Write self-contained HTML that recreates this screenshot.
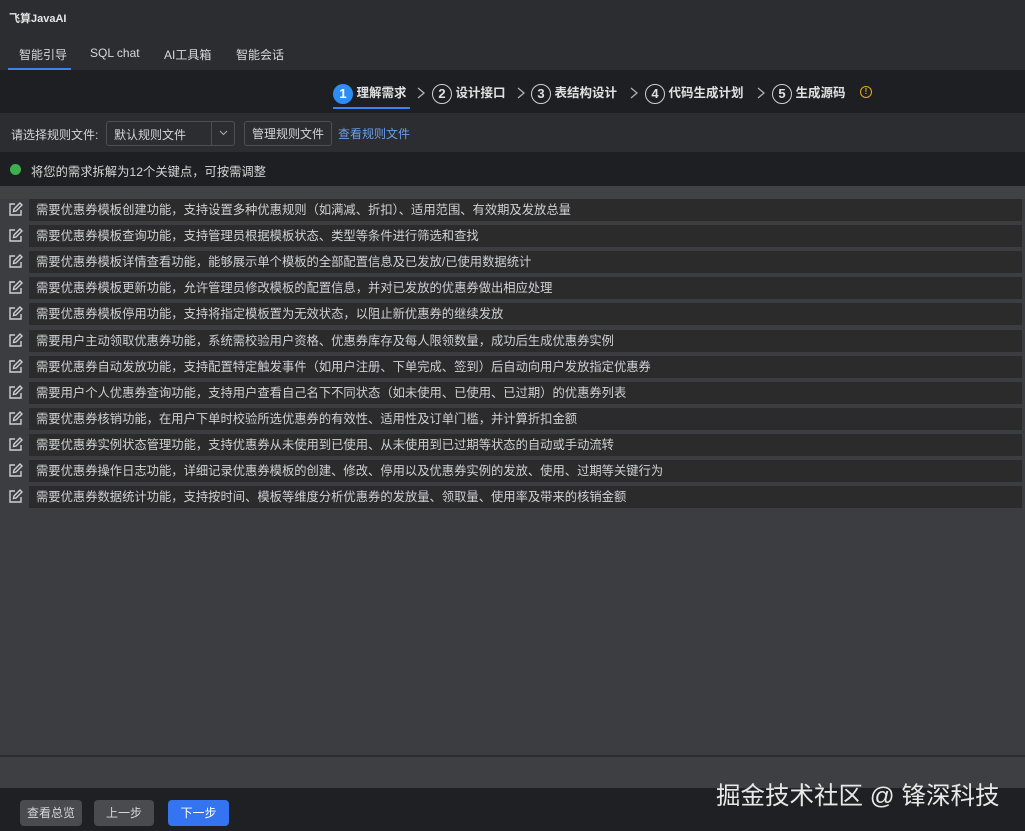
<!DOCTYPE html>
<html><head><meta charset="utf-8"><style>
*{margin:0;padding:0;box-sizing:border-box}
body{width:1025px;height:831px;overflow:hidden;background:#3c3d40;font-family:"Liberation Sans","Noto Sans CJK SC",sans-serif;font-size:12px;color:#d4d5d8;position:relative}
.abs{position:absolute}
.top{left:0;top:0;width:1025px;height:70px;background:#2b2d30}
.steps{left:0;top:70px;width:1025px;height:43px;background:#1e1f22}
.tool{left:0;top:113px;width:1025px;height:39px;background:#2b2d30}
.status{left:0;top:152px;width:1025px;height:34px;background:#1e1f22}
.band{left:0;top:186px;width:1025px;height:13px;background:#414244}
.row{left:29px;width:993px;height:22px;background:#2b2b2c;line-height:22px;padding-left:7px;font-size:12.3px;color:#d0d1d3;white-space:nowrap}
.ic{left:8px;width:15px;height:15px}
.circ{display:inline-block;width:20px;height:20px;border-radius:50%;border:1.5px solid #cfd0d2;text-align:center;line-height:17px;font-size:13px;vertical-align:middle}
.step{position:absolute;top:82px;font-weight:bold;font-size:12.5px;color:#dfe0e2;white-space:nowrap}
.arrow{position:absolute;top:86px;width:14px;height:14px}
.btn{position:absolute;top:800px;height:26px;border-radius:4px;line-height:26px;text-align:center;font-size:12px}
</style></head><body>
<div class="abs top"></div>
<div class="abs" style="left:9px;top:10px;font-size:11px;font-weight:bold;color:#e6e6e8">飞算JavaAI</div>
<div class="abs" style="left:19px;top:46px;color:#d8d9db">智能引导</div>
<div class="abs" style="left:90px;top:46px;color:#d8d9db">SQL chat</div>
<div class="abs" style="left:164px;top:46px;color:#d8d9db">AI工具箱</div>
<div class="abs" style="left:236px;top:46px;color:#d8d9db">智能会话</div>
<div class="abs" style="left:8px;top:68px;width:63px;height:2px;background:#3b82f6"></div>
<div class="abs steps"></div>
<div class="step" style="left:333px"><span class="circ" style="background:#2f8cf2;border-color:#2f8cf2;color:#fff">1</span> 理解需求</div>
<div class="abs" style="left:333px;top:107px;width:77px;height:2px;background:#3b82f6"></div>
<svg class="arrow" style="left:414px" viewBox="0 0 14 14" fill="none" stroke="#b0b1b4" stroke-width="1.3"><path d="M4 2l6 5-6 5"/></svg>
<div class="step" style="left:432px"><span class="circ">2</span> 设计接口</div>
<svg class="arrow" style="left:514px" viewBox="0 0 14 14" fill="none" stroke="#b0b1b4" stroke-width="1.3"><path d="M4 2l6 5-6 5"/></svg>
<div class="step" style="left:531px"><span class="circ">3</span> 表结构设计</div>
<svg class="arrow" style="left:627px" viewBox="0 0 14 14" fill="none" stroke="#b0b1b4" stroke-width="1.3"><path d="M4 2l6 5-6 5"/></svg>
<div class="step" style="left:645px"><span class="circ">4</span> 代码生成计划</div>
<svg class="arrow" style="left:754px" viewBox="0 0 14 14" fill="none" stroke="#b0b1b4" stroke-width="1.3"><path d="M4 2l6 5-6 5"/></svg>
<div class="step" style="left:772px"><span class="circ">5</span> 生成源码</div>
<div class="abs" style="left:860px;top:86px;width:12px;height:12px;border:1.5px solid #e5a91a;border-radius:50%;color:#e5a91a;font-size:8px;line-height:9px;text-align:center;font-weight:bold">!</div>
<div class="abs tool"></div>
<div class="abs" style="left:11px;top:126px">请选择规则文件:</div>
<div class="abs" style="left:106px;top:121px;width:129px;height:25px;border:1px solid #4e5054;border-radius:3px;background:#2b2d30"><span style="position:absolute;left:7px;top:4px">默认规则文件</span><div style="position:absolute;left:104px;top:0;width:1px;height:23px;background:#4e5054"></div><svg style="position:absolute;left:112px;top:8px" width="9" height="6" viewBox="0 0 9 6" fill="none" stroke="#aaa" stroke-width="1.1"><path d="M1 1l3.5 3.5L8 1"/></svg></div>
<div class="abs" style="left:244px;top:121px;width:88px;height:25px;border:1px solid #4e5054;border-radius:3px;text-align:center;line-height:24px">管理规则文件</div>
<div class="abs" style="left:338px;top:125px;color:#6d9ee8">查看规则文件</div>
<div class="abs status"></div>
<div class="abs" style="left:10px;top:164px;width:11px;height:11px;border-radius:50%;background:#3fae4f"></div>
<div class="abs" style="left:31px;top:162px;color:#d6d7d9;font-size:12.3px">将您的需求拆解为12个关键点，可按需调整</div>
<div class="abs band"></div>
<div id="rows"></div>
<div class="abs" style="left:0;top:755px;width:1025px;height:2px;background:#2b2c2e"></div>
<div class="abs" style="left:0;top:757px;width:1025px;height:33px;background:#3e3f42"></div>
<div class="abs" style="left:0;top:788px;width:1025px;height:43px;background:#1f2023"></div>
<div class="btn" style="left:20px;width:62px;background:#4a4b4e;color:#d6d7d9">查看总览</div>
<div class="btn" style="left:94px;width:60px;background:#4a4b4e;color:#d6d7d9">上一步</div>
<div class="btn" style="left:168px;width:61px;background:#3574f0;color:#fff">下一步</div>
<div class="abs" style="left:716px;top:777px;font-size:24.5px;color:#e8e8e8;white-space:nowrap">掘金技术社区 @ 锋深科技</div>
<script>
var t=["需要优惠券模板创建功能，支持设置多种优惠规则（如满减、折扣）、适用范围、有效期及发放总量","需要优惠券模板查询功能，支持管理员根据模板状态、类型等条件进行筛选和查找","需要优惠券模板详情查看功能，能够展示单个模板的全部配置信息及已发放/已使用数据统计","需要优惠券模板更新功能，允许管理员修改模板的配置信息，并对已发放的优惠券做出相应处理","需要优惠券模板停用功能，支持将指定模板置为无效状态，以阻止新优惠券的继续发放","需要用户主动领取优惠券功能，系统需校验用户资格、优惠券库存及每人限领数量，成功后生成优惠券实例","需要优惠券自动发放功能，支持配置特定触发事件（如用户注册、下单完成、签到）后自动向用户发放指定优惠券","需要用户个人优惠券查询功能，支持用户查看自己名下不同状态（如未使用、已使用、已过期）的优惠券列表","需要优惠券核销功能，在用户下单时校验所选优惠券的有效性、适用性及订单门槛，并计算折扣金额","需要优惠券实例状态管理功能，支持优惠券从未使用到已使用、从未使用到已过期等状态的自动或手动流转","需要优惠券操作日志功能，详细记录优惠券模板的创建、修改、停用以及优惠券实例的发放、使用、过期等关键行为","需要优惠券数据统计功能，支持按时间、模板等维度分析优惠券的发放量、领取量、使用率及带来的核销金额"];
var h="";t.forEach(function(s,i){var y=199+i*26.1;h+='<div class="abs row" style="top:'+y+'px">'+s+'</div><svg class="abs ic" style="top:'+(y+3)+'px" viewBox="0 0 15 15" fill="none" stroke="#cfd0d2" stroke-width="1.4"><path d="M7 2H2v11h11V8"/><path d="M5.5 9.5l.5-2.5 6-6 2 2-6 6z"/></svg>'});
document.getElementById("rows").innerHTML=h;
</script>
</body></html>
